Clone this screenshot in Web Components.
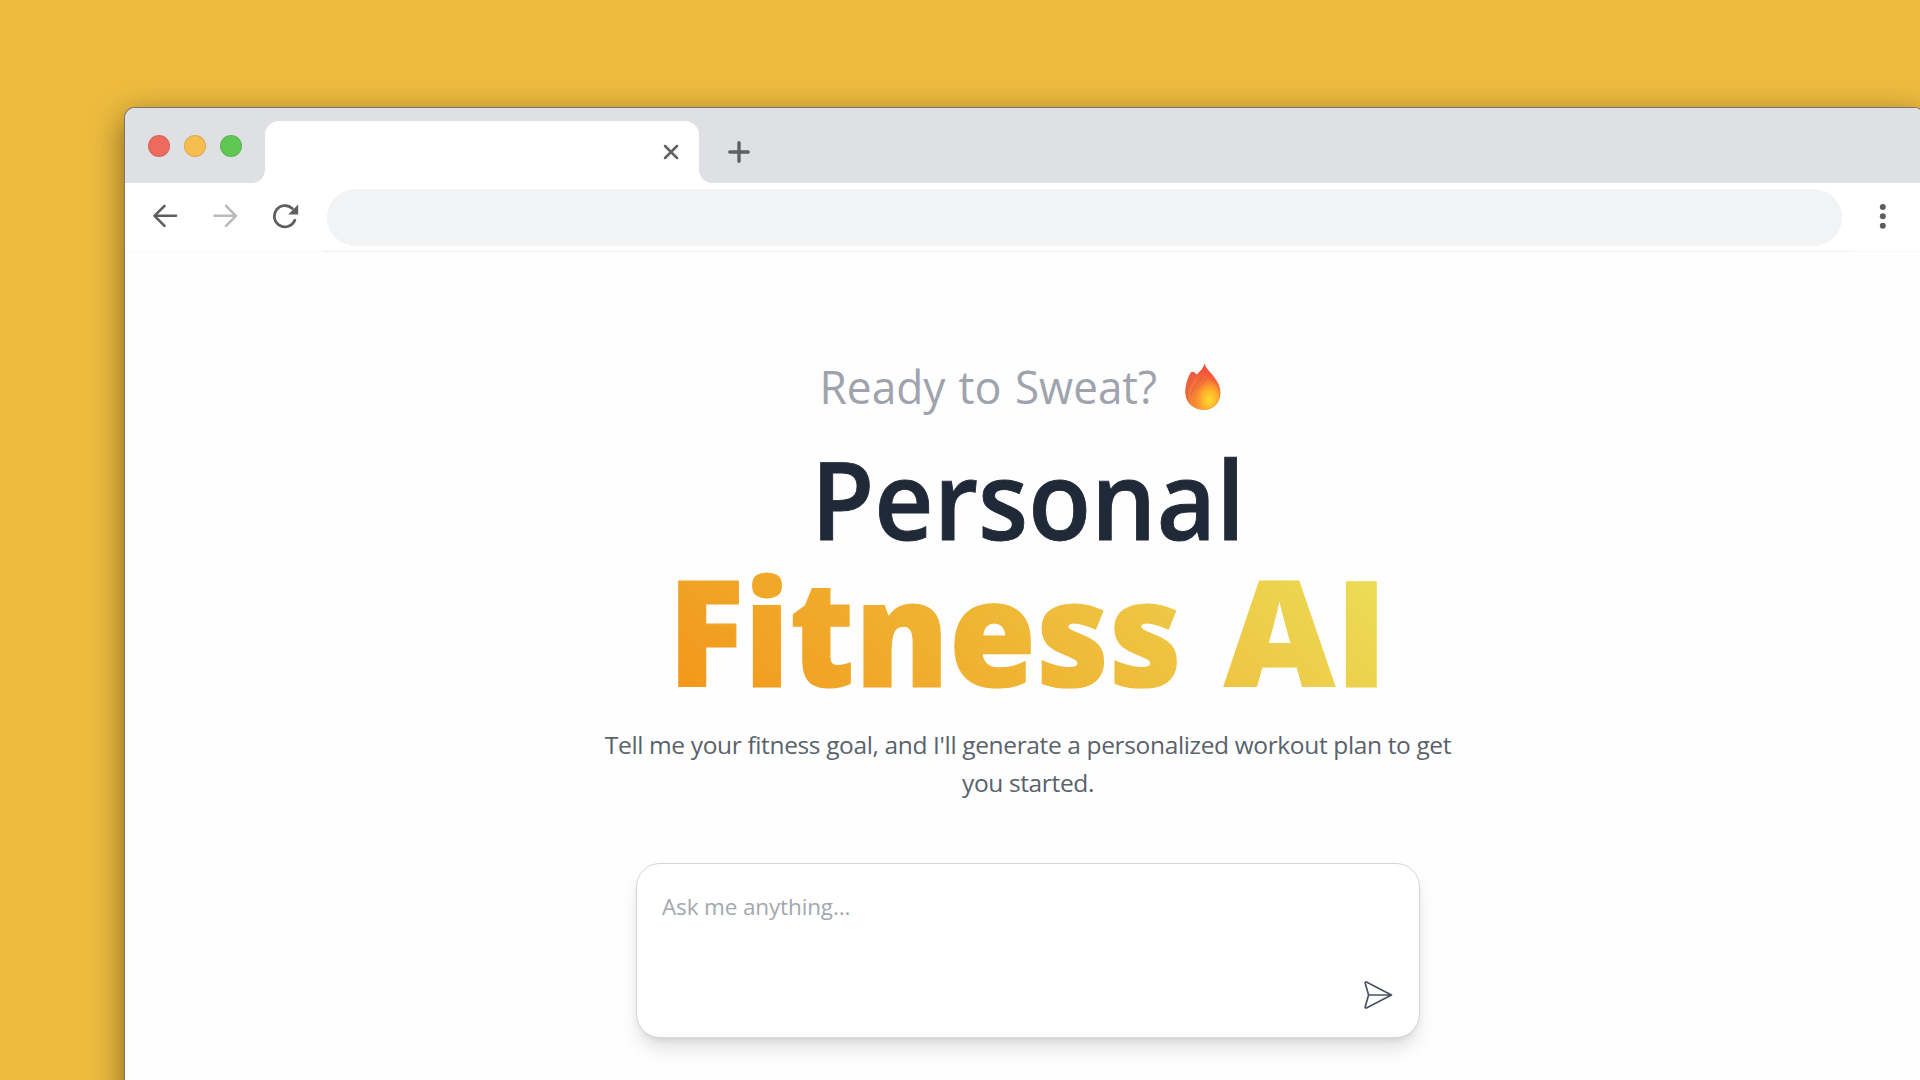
<!DOCTYPE html>
<html lang="en">
<head>
<meta charset="utf-8">
<title>Personal Fitness AI</title>
<style>
html,body{margin:0;height:100%;overflow:hidden}
body{background:#edbc3f;font-family:"Open Sans","Noto Sans",sans-serif}
</style>
</head>
<body>
<demo-stage>
  <browser-window>
    <tab-strip slot="chrome"></tab-strip>
    <tool-bar slot="chrome"></tool-bar>
    <fitness-hero></fitness-hero>
    <prompt-box placeholder="Ask me anything..."></prompt-box>
  </browser-window>
</demo-stage>
<script>
function define(name, html){
  const tpl = document.createElement('template');
  tpl.innerHTML = html;
  customElements.define(name, class extends HTMLElement{
    constructor(){
      super();
      this.attachShadow({mode:'open'}).append(tpl.content.cloneNode(true));
    }
    connectedCallback(){
      const p = this.shadowRoot.querySelector('[data-placeholder]');
      if(p) p.textContent = this.getAttribute('placeholder');
    }
  });
}

define('demo-stage', `
<style>
:host{display:block;box-sizing:border-box;width:1920px;height:1080px;padding:108px 0 0 125px;overflow:hidden}
</style><slot></slot>`);

define('browser-window', `
<style>
:host{display:flex;flex-direction:column;width:1799px;height:1100px;border-radius:10px 10px 0 0;background:#fefefe;
box-shadow:0 0 0 1px #77776f,0 10px 32px 1px rgba(40,25,0,.55)}
.chrome{display:flex;flex-direction:column;border-radius:10px 10px 0 0;overflow:hidden;flex:none}
main{display:flex;flex-direction:column;align-items:center;width:1806px}
</style>
<div class="chrome"><slot name="chrome"></slot></div>
<main><slot></slot></main>`);

define('traffic-lights', `
<style>
:host{display:flex;gap:14.2px;padding:27px 0 0 22.5px;width:142px;box-sizing:border-box;flex:none}
i{width:22px;height:22px;border-radius:50%;flex:none;box-sizing:border-box;border:1px solid rgba(90,80,60,.16)}
</style>
<i style="background:#ee6a5f"></i><i style="background:#f7bd4e"></i><i style="background:#5fc853"></i>`);

define('browser-tab', `
<style>
:host{display:flex;align-items:flex-end;height:75px}
.tab{display:flex;justify-content:flex-end;width:434px;height:62px;background:#fff;border-radius:14px 14px 0 0}
.flare{width:13px;height:13px;flex:none}
.l{background:radial-gradient(circle at 0 0,transparent 12.5px,#fff 13.2px)}
.r{background:radial-gradient(circle at 100% 0,transparent 12.5px,#fff 13.2px)}
svg{margin:23px 20.5px 0 0}
</style>
<div class="flare l"></div>
<div class="tab"><svg width="16" height="16" viewBox="0 0 16 16" stroke="#5f6063" stroke-width="2.500" stroke-linecap="round"><path d="M2 2 14 14M14 2 2 14"/></svg></div>
<div class="flare r"></div>`);

define('tab-strip', `
<style>
:host{display:flex;height:75px;background:#dfe0e4}
browser-tab{margin-left:-15px}
.plus{margin:33px 0 0 16px}
</style>
<traffic-lights></traffic-lights>
<browser-tab></browser-tab>
<svg class="plus" width="22" height="22" viewBox="0 0 22 22" stroke="#5f6063" stroke-width="3.4" stroke-linecap="round"><path d="M11 1.8V20.2M1.8 11H20.2"/></svg>`);

define('tool-bar', `
<style>
:host{display:flex;align-items:flex-start;box-sizing:border-box;height:69px;padding:6px 0 0 28px;background:#fff;
border-bottom:1px solid;border-image:linear-gradient(90deg,#f9f9f9 197px,#ededed 200px,#ededed 1717px,#f7f7f7 1730px) 1}
svg{flex:none;margin-top:14px}
.addr{width:1515px;height:57px;border-radius:28.5px;background:#f1f3f4;margin-left:26px;flex:none}
.fwd{margin-left:34px}.rel{margin-left:33px}.menu{margin-left:37px}
</style>
<svg width="26" height="26" viewBox="0 0 26 26" fill="none" stroke="#5f5f61" stroke-width="2.6" stroke-linecap="round" stroke-linejoin="round"><path d="M23 12.8H1.500M11.500 2.8 1.500 12.8 11.500 22.8"/></svg>
<svg class="fwd" width="26" height="26" viewBox="0 0 26 26" fill="none" stroke="#b9babb" stroke-width="2.6" stroke-linecap="round" stroke-linejoin="round"><path d="M1.6 12.8H23M13 2.8 23 12.8 13 22.8"/></svg>
<svg class="rel" width="29" height="26" viewBox="0 0 29 26" fill="none" stroke="#5f5f61" stroke-width="2.8" stroke-linecap="round"><path d="M22.800 17.200A10.600 10.600 0 1 1 20.3 5.6"/><path d="M26.200 1.4V11.4H16.200Z" fill="#5f5f61" stroke="none"/></svg>
<div class="addr"></div>
<svg class="menu" width="8" height="26" viewBox="0 0 8 26" fill="#5f5f61"><circle cx="3.8" cy="4" r="3"/><circle cx="3.8" cy="13.3" r="3"/><circle cx="3.8" cy="22.7" r="3"/></svg>`);

define('fire-emoji', `
<style>:host{display:block;width:36px;height:48px}svg{display:block}</style>
<svg width="36" height="48" viewBox="0 0 36 48">
<defs>
<linearGradient id="a" x1=".6" y1="0" x2=".45" y2="1"><stop offset="0" stop-color="#f2423c"/><stop offset=".42" stop-color="#f4703a"/><stop offset="1" stop-color="#f58a33"/></linearGradient>
<linearGradient id="b" x1=".2" y1="0" x2=".4" y2="1"><stop offset="0" stop-color="#ee5a45"/><stop offset="1" stop-color="#ea6a38"/></linearGradient>
<radialGradient id="c" cx=".62" cy=".72" r=".66"><stop offset="0" stop-color="#ffdc2e"/><stop offset=".5" stop-color="#fdac2b"/><stop offset="1" stop-color="#f98a32" stop-opacity=".1"/></radialGradient>
</defs>
<path d="M19.6.6C20.4 5 25 8.600 29.500 14.500C33.500 19.800 36 25.500 35.300 31.500C34.600 39.500 29.500 46.700 19 46.900C8.500 47 1.500 40.500.6 31C-.1 23.500 2.500 15 5.600 10C6.300 8.700 8.500 8.700 9.600 9.600L11.700 11.500C15.200 8.500 18.600 5 19.600.6Z" fill="url(#a)"/>
<path d="M9.700 9.600C12.500 13 7 20 4.500 26C2.800 31 3 36 5 40.500C1.500 37 .6 33.500.5 29C.4 22.500 2.600 15 5.600 10C6.400 8.800 8.400 8.600 9.700 9.600Z" fill="url(#b)"/>
<path d="M22.500 12.500C24 17.500 17 21 11.500 28C8 33 7.500 39 10.500 44.500C14 47 25 48 30 42C35 37 35.500 30 33 25C30.500 19.500 25 18 22.500 12.500Z" fill="url(#c)"/>
<path d="M17.500 13C14 19 8 23.500 6 31.500" fill="none" stroke="#dd5a3c" stroke-opacity=".55" stroke-width="1.800" stroke-linecap="round"/>
</svg>`);

define('fitness-hero', `
<style>
:host{display:flex;flex-direction:column;align-items:center;width:860px;text-align:center}
.ready{display:flex;align-items:flex-start;margin:100px 0 0 -10px;gap:26px;height:70px}
svg{display:block;overflow:visible}
fire-emoji{margin-top:11px}
p{margin:24px 0 0;font-size:24.5px;line-height:37.7px;letter-spacing:-.36px;color:#5a626b;width:860px;height:80px}
</style>
<div class="ready">
<svg width="334" height="70"><text y="51.500" font-size="46" font-weight="400" fill="#a0a3ad"><tspan x="-5.500" textLength="126" lengthAdjust="spacingAndGlyphs">Ready</tspan> <tspan x="133.500" textLength="43" lengthAdjust="spacingAndGlyphs">to</tspan> <tspan x="190" textLength="142" lengthAdjust="spacingAndGlyphs">Sweat?</tspan></text></svg>
<fire-emoji></fire-emoji>
</div>
<svg width="860" height="280">
<defs><linearGradient id="g" gradientUnits="userSpaceOnUse" x1="80" y1="265" x2="482" y2="-137"><stop offset="0" stop-color="#f2981b"/><stop offset=".5" stop-color="#efb837"/><stop offset="1" stop-color="#ecdc56"/></linearGradient></defs>
<text x="213" y="118" font-size="109.500" font-weight="600" fill="#1f2937" stroke="#1f2937" stroke-width=".9" textLength="434" lengthAdjust="spacingAndGlyphs">Personal</text>
<text y="264.700" font-size="146.500" font-weight="800" fill="url(#g)" stroke="url(#g)" stroke-width="1.2"><tspan x="70" textLength="514" lengthAdjust="spacingAndGlyphs" font-family="Noto Sans" font-weight="900">Fitness</tspan> <tspan x="626" textLength="164" lengthAdjust="spacingAndGlyphs">AI</tspan></text>
</svg>
<p>Tell me your fitness goal, and I'll generate a personalized workout plan to get you started.</p>`);

define('prompt-box', `
<style>
:host{display:flex;flex-direction:column;justify-content:space-between;box-sizing:border-box;width:784px;height:175px;margin-top:56.5px;
border:1px solid #d6d7da;border-radius:24px;background:#fff;padding:26px 26px 26.5px 25px;
box-shadow:0 13px 20px -4px rgba(0,0,0,.13),0 4px 8px -4px rgba(0,0,0,.12)}
span{font-size:22.500px;line-height:34px;letter-spacing:-.14px;color:#a3a8ae}
svg{align-self:flex-end;display:block}
</style>
<span data-placeholder></span>
<svg width="30" height="30" viewBox="0 0 30 30" fill="none" stroke="#4b5260" stroke-width="1.700" stroke-linejoin="round" stroke-linecap="round"><path d="M5.600 15 2.200 3.200Q1.900 1.600 3.400 2.100L28.500 15 3.400 27.900Q1.900 28.400 2.200 26.800Z M5.600 15H28"/></svg>`);
</script>
</body>
</html>
